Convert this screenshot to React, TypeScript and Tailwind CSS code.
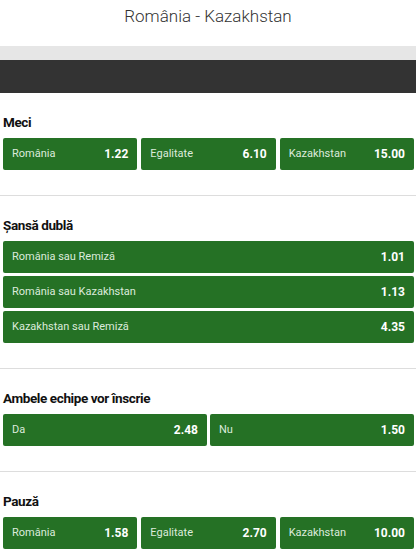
type Odd = { label: string; value: string }

const sections: { title: string; cols: number; odds: Odd[] }[] = [
  {
    title: 'Meci',
    cols: 3,
    odds: [
      { label: 'România', value: '1.22' },
      { label: 'Egalitate', value: '6.10' },
      { label: 'Kazakhstan', value: '15.00' },
    ],
  },
  {
    title: 'Șansă dublă',
    cols: 1,
    odds: [
      { label: 'România sau Remiză', value: '1.01' },
      { label: 'România sau Kazakhstan', value: '1.13' },
      { label: 'Kazakhstan sau Remiză', value: '4.35' },
    ],
  },
  {
    title: 'Ambele echipe vor înscrie',
    cols: 2,
    odds: [
      { label: 'Da', value: '2.48' },
      { label: 'Nu', value: '1.50' },
    ],
  },
  {
    title: 'Pauză',
    cols: 3,
    odds: [
      { label: 'România', value: '1.58' },
      { label: 'Egalitate', value: '2.70' },
      { label: 'Kazakhstan', value: '10.00' },
    ],
  },
]

const OddButton = ({ odd }: { odd: Odd }) => (
  <button className="flex h-8 items-center justify-between rounded-[2px] bg-[#257125] pl-[9px] pr-[9px]">
    <span className="text-[11px] text-[#dcebdc]">{odd.label}</span>
    <span className="text-[12px] font-bold text-white">{odd.value}</span>
  </button>
)

export default function App() {
  return (
    <div className="min-h-[554px] bg-white font-['Roboto',sans-serif] text-[#111]">
      <div className="h-[46px] pt-[5px] text-center text-[17px] leading-[22px] font-light text-[#333]">
        România - Kazakhstan
      </div>
      <div className="h-[14px] bg-[#e6e6e6]" />
      <div className="h-[33px] bg-[#333333]" />

      {sections.map((s, i) => (
        <div key={s.title} className={i > 0 ? 'border-t border-[#dddddd]' : ''}>
          <div className="pt-[21px] pb-[25px] pl-[3px] pr-[2px]">
            <h2 className="mb-2 h-4 text-[13.5px] leading-4 font-bold tracking-[-0.4px]">{s.title}</h2>
            {s.cols === 1 ? (
              <div className="flex flex-col gap-[3px]">
                {s.odds.map((o) => (
                  <OddButton key={o.label} odd={o} />
                ))}
              </div>
            ) : s.cols === 2 ? (
              <div className="grid grid-cols-2 gap-[3px]">
                {s.odds.map((o) => (
                  <OddButton key={o.label} odd={o} />
                ))}
              </div>
            ) : (
              <div className="grid grid-cols-3 gap-[4px]">
                {s.odds.map((o) => (
                  <OddButton key={o.label} odd={o} />
                ))}
              </div>
            )}
          </div>
        </div>
      ))}
    </div>
  )
}
